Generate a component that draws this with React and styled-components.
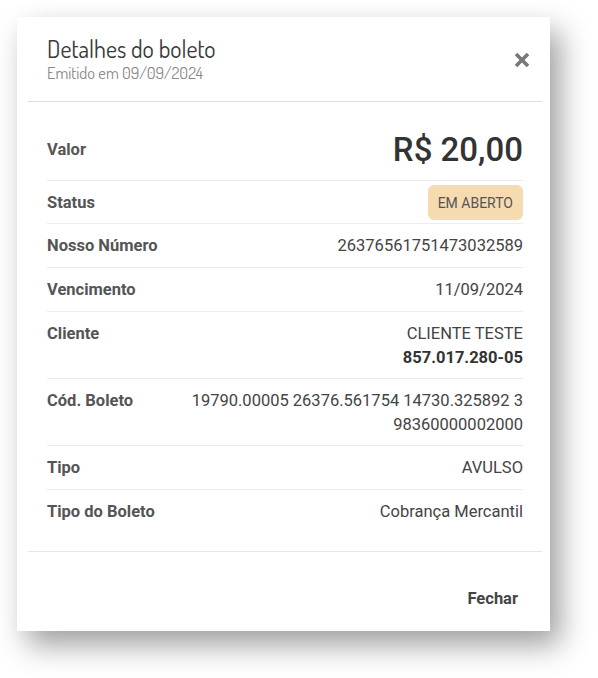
import React from 'react'
import styled, { createGlobalStyle } from 'styled-components'

const GlobalStyle = createGlobalStyle`
  body {
    margin: 0;
    background: #ffffff;
    font-family: Roboto, 'Liberation Sans', sans-serif;
  }
`

const Page = styled.div`
  padding: 17px 0 48px 17px;
`

const Card = styled.div`
  width: 533px;
  background: #ffffff;
  box-shadow: 10px 14px 28px rgba(0, 0, 0, 0.38);
`

const Header = styled.div`
  margin: 0 8px 0 11px;
  padding: 18px 12px 18px 19px;
  border-bottom: 1px solid #dedede;
  display: flex;
  justify-content: space-between;
  align-items: flex-start;
`

const Title = styled.h1`
  margin: 0;
  font-family: Dosis, Roboto, sans-serif;
  font-weight: 400;
  font-size: 24px;
  line-height: 28px;
  color: #3a3a3a;
`

const Subtitle = styled.div`
  font-family: Dosis, Roboto, sans-serif;
  font-weight: 400;
  font-size: 16.5px;
  line-height: 20px;
  color: #8a8a8a;
`

const CloseButton = styled.button`
  border: none;
  background: none;
  padding: 0;
  width: 16px;
  height: 16px;
  margin-top: 17px;
  cursor: pointer;
  display: flex;
`

const Body = styled.div`
  padding: 28px 27px 18px 30px;
`

const Row = styled.div`
  display: grid;
  grid-template-columns: 130px 1fr;
  column-gap: 10px;
  align-items: ${p => (p.center ? 'center' : 'start')};
  padding: ${p => p.pad || '10px 0 9px'};
  border-bottom: ${p => (p.last ? 'none' : '1px solid #ececec')};
`

const Label = styled.div`
  font-size: 16.5px;
  line-height: 24px;
  font-weight: 700;
  color: #555555;
`

const Value = styled.div`
  font-size: 16.5px;
  line-height: 24px;
  color: #444444;
  text-align: right;
  word-break: break-word;
`

const Strong = styled.div`
  font-weight: 700;
  color: #333333;
`

const Amount = styled.div`
  font-size: 33px;
  line-height: 40px;
  font-weight: 500;
  color: #333333;
  text-align: right;
`

const Badge = styled.span`
  display: inline-flex;
  align-items: center;
  height: 35px;
  padding: 0 10px;
  border-radius: 6px;
  background: #f6dbb1;
  color: #555555;
  font-size: 14px;
`

const Footer = styled.div`
  margin: 0 8px 0 11px;
  border-top: 1px solid #e6e6e6;
  padding: 29px 16px 15px;
  display: flex;
  justify-content: flex-end;
`

const TextButton = styled.button`
  border: none;
  background: none;
  padding: 8px 8px;
  font-family: Roboto, 'Liberation Sans', sans-serif;
  font-size: 16.5px;
  line-height: 19px;
  font-weight: 700;
  color: #444444;
  cursor: pointer;
`

const CloseIcon = () => (
  <svg width="16" height="16" viewBox="0 0 16 16">
    <path d="M2 2 L14 14 M14 2 L2 14" stroke="#777777" strokeWidth="3.6" strokeLinecap="butt" />
  </svg>
)

const App = () => {
  return (
    <Page>
      <GlobalStyle />
      <Card>
        <Header>
          <div>
            <Title>Detalhes do boleto</Title>
            <Subtitle>Emitido em 09/09/2024</Subtitle>
          </div>
          <CloseButton aria-label="Fechar">
            <CloseIcon />
          </CloseButton>
        </Header>
        <Body>
          <Row center pad="0 0 10px">
            <Label>Valor</Label>
            <Amount>R$ 20,00</Amount>
          </Row>
          <Row center pad="4px 0 3px">
            <Label>Status</Label>
            <Value>
              <Badge>EM ABERTO</Badge>
            </Value>
          </Row>
          <Row>
            <Label>Nosso Número</Label>
            <Value>26376561751473032589</Value>
          </Row>
          <Row>
            <Label>Vencimento</Label>
            <Value>11/09/2024</Value>
          </Row>
          <Row pad="10px 0 8px">
            <Label>Cliente</Label>
            <Value>
              CLIENTE TESTE
              <Strong>857.017.280-05</Strong>
            </Value>
          </Row>
          <Row pad="10px 0 8px">
            <Label>Cód. Boleto</Label>
            <Value>19790.00005 26376.561754 14730.325892 3 98360000002000</Value>
          </Row>
          <Row>
            <Label>Tipo</Label>
            <Value>AVULSO</Value>
          </Row>
          <Row last>
            <Label>Tipo do Boleto</Label>
            <Value>Cobrança Mercantil</Value>
          </Row>
        </Body>
        <Footer>
          <TextButton>Fechar</TextButton>
        </Footer>
      </Card>
    </Page>
  )
}

export default App
